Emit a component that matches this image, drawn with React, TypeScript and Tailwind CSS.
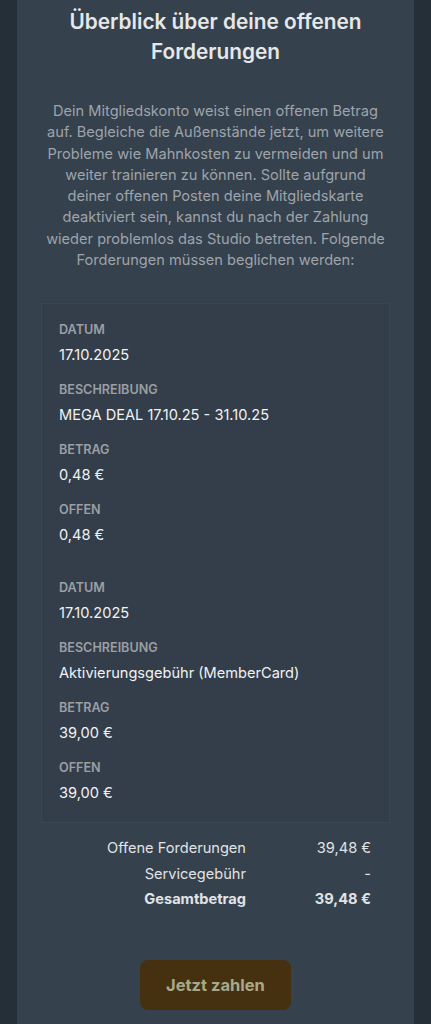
import React from "react";

interface Claim {
  date: string;
  description: string;
  amount: string;
  open: string;
}

const claims: Claim[] = [
  {
    date: "17.10.2025",
    description: "MEGA DEAL 17.10.25 - 31.10.25",
    amount: "0,48 €",
    open: "0,48 €",
  },
  {
    date: "17.10.2025",
    description: "Aktivierungsgebühr (MemberCard)",
    amount: "39,00 €",
    open: "39,00 €",
  },
];

// lines broken as in the design
const introLines = [
  "Dein Mitgliedskonto weist einen offenen Betrag",
  "auf. Begleiche die Außenstände jetzt, um weitere",
  "Probleme wie Mahnkosten zu vermeiden und um",
  "weiter trainieren zu können. Sollte aufgrund",
  "deiner offenen Posten deine Mitgliedskarte",
  "deaktiviert sein, kannst du nach der Zahlung",
  "wieder problemlos das Studio betreten. Folgende",
  "Forderungen müssen beglichen werden:",
];

function Field({ label, value }: { label: string; value: string }) {
  return (
    <div className="flex flex-col">
      <span className="text-[12.6px] leading-[16px] font-semibold uppercase text-[#9c9fa3]">
        {label}
      </span>
      <span className="mt-[7px] text-[14.6px] leading-[20px] text-[#f1f2f3]">{value}</span>
    </div>
  );
}

export default function App() {
  return (
    <div
      className="min-h-screen bg-[#252f38] px-[17px]"
      style={{ fontFamily: "Inter, 'Noto Sans', sans-serif" }}
    >
      <div className="min-h-[1024px] bg-[#35414d] px-[24px] pt-[7px]">
        {/* Heading */}
        <h1 className="text-center text-[20.8px] leading-[30px] font-semibold text-[#e6e7e9]">
          Überblick über deine offenen
          <br />
          Forderungen
        </h1>

        <p className="mt-[34px] text-center text-[14.6px] leading-[21.3px] text-[#9ea4ab]">
          {introLines.map((l, i) => (
            <React.Fragment key={i}>
              {l}
              {i < introLines.length - 1 && <br />}
            </React.Fragment>
          ))}
        </p>

        {/* Claims list */}
        <div className="mt-[32px] border border-[#3a4652] bg-[#333e4a] px-[17px] pt-[18px] pb-[19px]">
          {claims.map((c, i) => (
            <div key={i} className={`flex flex-col gap-[17px] ${i > 0 ? "mt-[35px]" : ""}`}>
              <Field label="Datum" value={c.date} />
              <Field label="Beschreibung" value={c.description} />
              <Field label="Betrag" value={c.amount} />
              <Field label="Offen" value={c.open} />
            </div>
          ))}
        </div>

        {/* Totals */}
        <div className="mt-[15px] grid grid-cols-[205px_125px] gap-y-[5px] text-[14.6px] leading-[20.5px] text-[#e1e3e6]">
          <span className="text-right">Offene Forderungen</span>
          <span className="text-right">39,48 €</span>
          <span className="text-right">Servicegebühr</span>
          <span className="text-right">-</span>
          <span className="text-right font-bold">Gesamtbetrag</span>
          <span className="text-right font-bold">39,48 €</span>
        </div>

        <div className="mt-[50px] flex justify-center">
          <button className="h-[50px] w-[151px] rounded-[8px] bg-[#453110] text-[16.5px] font-bold text-[#a9a98a]">
            Jetzt zahlen
          </button>
        </div>
      </div>
    </div>
  );
}
